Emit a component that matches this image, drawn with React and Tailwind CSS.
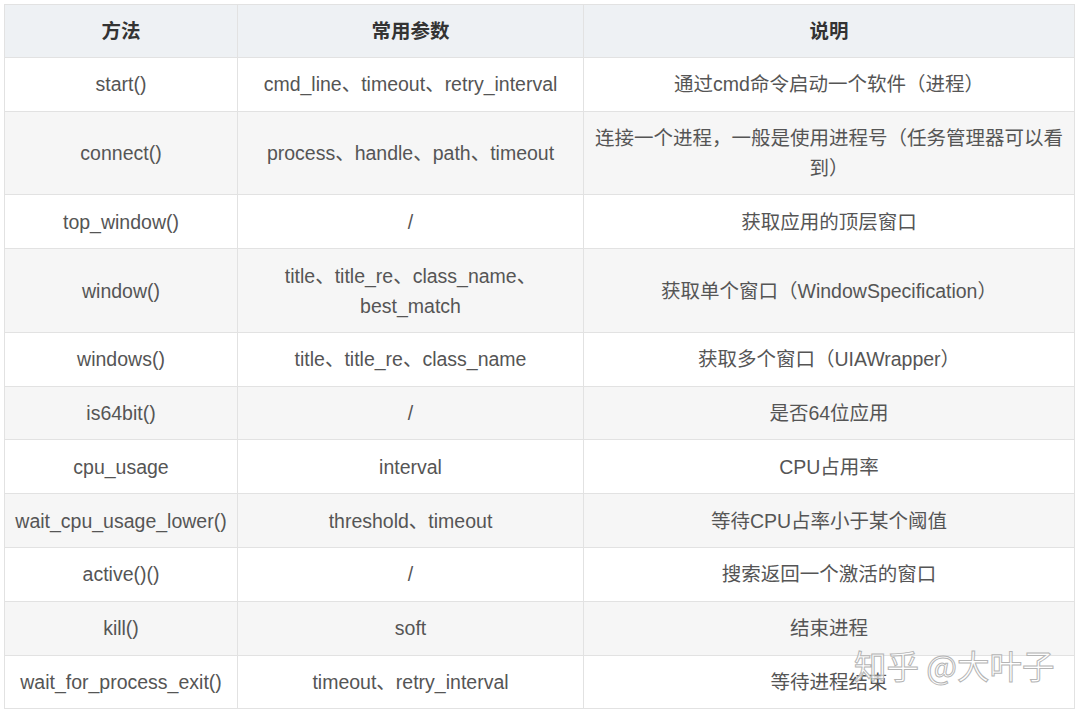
import React from 'react';

const rows = [
    ['start()', 'cmd_line、timeout、retry_interval', '通过cmd命令启动一个软件（进程）'],
    ['connect()', 'process、handle、path、timeout', '连接一个进程，一般是使用进程号（任务管理器可以看到）'],
    ['top_window()', '/', '获取应用的顶层窗口'],
    ['window()', 'title、title_re、class_name、best_match', '获取单个窗口（WindowSpecification）'],
    ['windows()', 'title、title_re、class_name', '获取多个窗口（UIAWrapper）'],
    ['is64bit()', '/', '是否64位应用'],
    ['cpu_usage', 'interval', 'CPU占用率'],
    ['wait_cpu_usage_lower()', 'threshold、timeout', '等待CPU占率小于某个阈值'],
    ['active()()', '/', '搜索返回一个激活的窗口'],
    ['kill()', 'soft', '结束进程'],
    ['wait_for_process_exit()', 'timeout、retry_interval', '等待进程结束'],
];

export default function App() {
    return (
        <div className="relative w-[1080px] h-[714px] bg-white overflow-hidden font-['Liberation_Sans','Noto_Sans_CJK_SC',sans-serif]">
            <div className="pt-[4px] pl-[4px]">
                <table className="table-fixed border-collapse w-[1070px] text-[19.5px] leading-[30px] text-[#555]">
                    <colgroup>
                        <col className="w-[233px]" />
                        <col className="w-[346px]" />
                        <col className="w-[491px]" />
                    </colgroup>
                    <thead>
                        <tr className="bg-[#eef1f4]">
                            {['方法', '常用参数', '说明'].map((h) => (
                                <th key={h} className="border border-[#e2e2e2] px-2 py-[10.9px] font-bold text-[#333] text-center">
                                    {h}
                                </th>
                            ))}
                        </tr>
                    </thead>
                    <tbody>
                        {rows.map((r, i) => (
                            <tr key={i} className={i % 2 === 1 ? 'bg-[#f6f6f6]' : 'bg-white'}>
                                {r.map((c, j) => (
                                    <td key={j} className="border border-[#e2e2e2] px-2 py-[11.4px] text-center">
                                        {c}
                                    </td>
                                ))}
                            </tr>
                        ))}
                    </tbody>
                </table>
            </div>

            {/* watermark */}
            <div className="absolute left-[854px] top-[642px] text-[32.5px] leading-[46px] text-white/70 [-webkit-text-stroke:1px_#b5b5b5] font-['Noto_Sans_CJK_SC',sans-serif] whitespace-nowrap">
                知乎 @大叶子
            </div>
        </div>
    );
}
